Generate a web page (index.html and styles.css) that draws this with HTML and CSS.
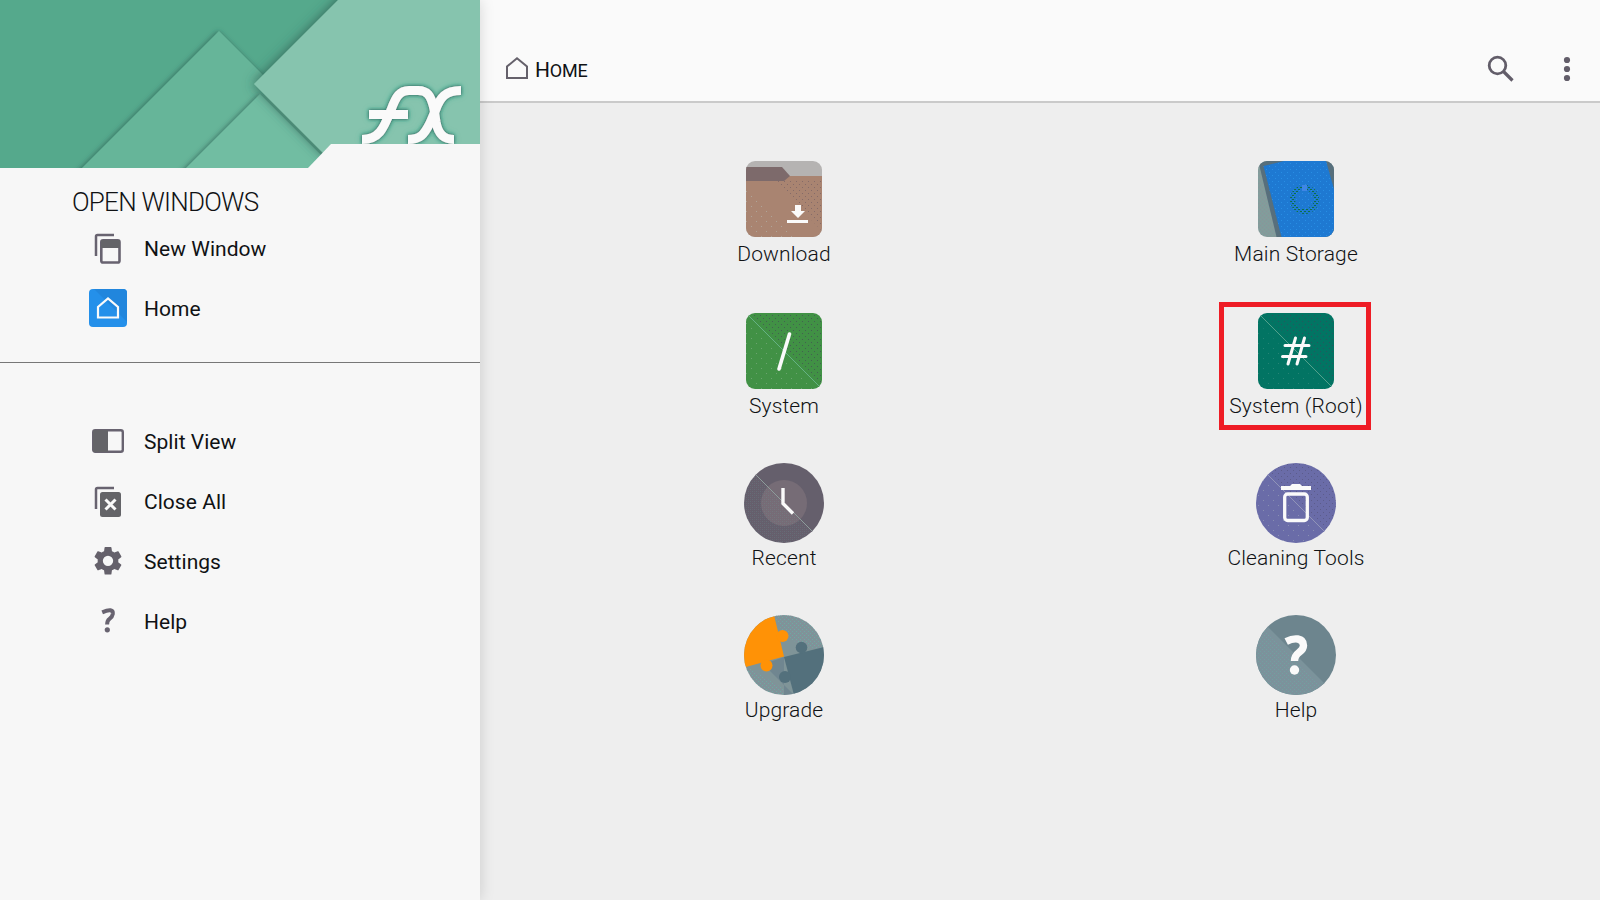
FILE: index.html
```html
<!DOCTYPE html>
<html lang="en">
<head>
<meta charset="utf-8">
<title>FX</title>
<link rel="stylesheet" href="styles.css">
</head>
<body>
<div class="app">
  <aside class="sidebar">
    <svg class="banner" width="480" height="168" viewBox="0 0 480 168">
      <defs>
        <filter id="soft" x="-30%" y="-30%" width="160%" height="160%"><feDropShadow dx="-1" dy="0" stdDeviation="6" flood-color="#2b5a50" flood-opacity=".8"/></filter>
        <filter id="thin" x="-30%" y="-30%" width="160%" height="160%"><feDropShadow dx="-1" dy="0" stdDeviation="2.500" flood-color="#2b5a50" flood-opacity=".75"/></filter>
        <filter id="glow" x="-20%" y="-20%" width="140%" height="140%"><feDropShadow dx="0" dy="0" stdDeviation="1.500" flood-color="#2d5f60" flood-opacity="1"/><feDropShadow dx="0" dy="0" stdDeviation="2.500" flood-color="#2f9377" flood-opacity=".7"/></filter>
      </defs>
      <rect width="480" height="168" fill="#55a98c"/>
      <path d="M219 31L340 152V200H50Z" fill="#66b599" filter="url(#thin)"/>
      <path d="M260 94L360 194H160Z" fill="#71bda2" filter="url(#thin)"/>
      <path d="M254 84L348-10H500V230H400Z" fill="#86c4ae" filter="url(#soft)"/>
      <g fill="none" stroke="#fafafa" stroke-width="9" filter="url(#glow)">
        <path d="M362 139.500C380 139.500 384 127 391 110C396 96 400 90.500 409 90.500H418C427 90.500 431 95 434 109L436 122C438 133 443 139.500 454 139.500"/>
        <path d="M369 114.500H408"/>
        <path d="M461 90.500C445 90.500 440 98 436 109L430 123C424 135 420 139.500 408 139.500"/>
      </g>
      <path d="M308 168L331 144H480V168Z" fill="#f7f7f7"/>
    </svg>
    <h2 class="side-title"><span>OPEN WINDOWS</span></h2>
    <nav class="side-list">
      <div class="side-item">
        <svg class="side-icon" viewBox="0 0 38 38"><path d="M7 27V7.500Q7 6 8.500 6H25" fill="none" stroke="#686370" stroke-width="2.500"/><rect x="12.300" y="11.300" width="18.200" height="22.200" rx="1.800" fill="#f7f7f7" stroke="#686370" stroke-width="2.600"/><path d="M12 11H31V19H12Z" fill="#646468"/></svg>
        <span>New Window</span>
      </div>
      <div class="side-item">
        <svg class="side-icon" viewBox="0 0 38 38"><rect width="38" height="38" rx="4" fill="#2490ea"/><path d="M5 0H34Q38 0 38 4V33Z" fill="#2186dd"/><path d="M9 28.500V18L19 9.500L29 18V28.500Z" fill="none" stroke="#fafafa" stroke-width="2.200"/></svg>
        <span>Home</span>
      </div>
    </nav>
    <div class="divider"></div>
    <nav class="side-list">
      <div class="side-item">
        <svg class="side-icon" viewBox="0 0 38 38"><rect x="4.200" y="8.200" width="29.600" height="21.600" rx="2" fill="#f7f7f7" stroke="#686370" stroke-width="2.400"/><path d="M4 8H19V30H4Z" fill="#646468"/></svg>
        <span>Split View</span>
      </div>
      <div class="side-item">
        <svg class="side-icon" viewBox="0 0 38 38"><path d="M7 27V7.500Q7 6 8.500 6H25" fill="none" stroke="#686370" stroke-width="2.500"/><rect x="11" y="10" width="21" height="25" rx="2.500" fill="#646468"/><path d="M16.500 17.500L26.500 27.500M26.500 17.500L16.500 27.500" stroke="#fafafa" stroke-width="3"/></svg>
        <span>Close All</span>
      </div>
      <div class="side-item">
        <svg class="side-icon" viewBox="2.600 2.700 18.800 18.800"><path fill="#65616b" d="M19.140 12.940c.04-.3.060-.610.060-.94 0-.320-.02-.640-.07-.94l2.030-1.580c.180-.140.230-.410.120-.610l-1.920-3.320c-.120-.220-.370-.290-.590-.220l-2.390.960c-.5-.380-1.030-.7-1.620-.94L14.400 2.810c-.04-.240-.240-.410-.480-.410h-3.840c-.240 0-.430.170-.470.410L9.250 5.350C8.660 5.590 8.120 5.920 7.630 6.290L5.240 5.330c-.220-.080-.470 0-.590.220L2.740 8.870c-.120.210-.080.470.120.610l2.030 1.580c-.050.3-.090.630-.090.940s.02.640.070.940l-2.030 1.580c-.180.140-.230.410-.120.610l1.920 3.320c.120.220.370.290.590.220l2.390-.96c.5.380 1.030.7 1.620.94l.360 2.540c.050.240.240.410.480.410h3.840c.240 0 .440-.170.470-.410l.360-2.540c.590-.240 1.130-.560 1.620-.94l2.390.96c.220.080.470 0 .590-.220l1.920-3.320c.120-.220.070-.470-.12-.610zM12 15.600A3.600 3.600 0 1 1 12 8.400a3.600 3.600 0 0 1 0 7.200z" transform="translate(12 12) scale(.71) translate(-12 -12)"/></svg>
        <span>Settings</span>
      </div>
      <div class="side-item">
        <svg class="side-icon" viewBox="0 0 38 38"><path d="M13.200 10.300Q24.500 5.500 23.800 12Q23.400 14.800 20.500 16.800Q18.100 18.500 18.100 22.500" fill="none" stroke="#686370" stroke-width="4"/><circle cx="18.300" cy="27.800" r="2.600" fill="#686370"/></svg>
        <span>Help</span>
      </div>
    </nav>
  </aside>

  <main class="main">
    <header class="topbar">
      <svg class="home" width="24" height="24" viewBox="0 0 24 24"><path d="M2 21V9.500L12 1.300L22 9.500V21Z" fill="none" stroke="#65616b" stroke-width="2"/></svg>
      <span class="crumb">H<small>OME</small></span>
      <svg class="search" width="28" height="28" viewBox="0 0 28 28"><circle cx="10.500" cy="10.500" r="8.300" fill="none" stroke="#625d69" stroke-width="2.800"/><path d="M16.500 16.500L25.500 25.500" stroke="#625d69" stroke-width="3.200"/></svg>
      <svg width="8" height="26" viewBox="0 0 8 26"><g fill="#625d69"><circle cx="4" cy="4" r="3.100"/><circle cx="4" cy="13" r="3.100"/><circle cx="4" cy="22" r="3.100"/></g></svg>
    </header>
    <section class="grid">
      <svg class="defs" width="0" height="0">
        <defs>
          <pattern id="dotDark" width="6" height="6" patternUnits="userSpaceOnUse"><path d="M1 1h1v1h-1zM4 4h1v1h-1z" fill="#444058" opacity=".6"/></pattern>
          <pattern id="dotLight" width="10" height="10" patternUnits="userSpaceOnUse"><path d="M2 2h1v1h-1zM7 7h1v1h-1z" fill="#b8c4be" opacity=".5"/></pattern>
          <pattern id="dotBlue" width="6" height="6" patternUnits="userSpaceOnUse"><path d="M1 1h1v1h-1zM4 4h1v1h-1z" fill="#2f9cf0" opacity=".6"/></pattern>
          <pattern id="mix" width="4" height="4" patternUnits="userSpaceOnUse"><path d="M0 0h1v1h-1zM2 2h1v1h-1z" fill="#6baeaa" opacity=".7"/><path d="M2 0h1v1h-1zM0 2h1v1h-1z" fill="#8a83a4" opacity=".5"/></pattern>
          <pattern id="ring" width="4" height="4" patternUnits="userSpaceOnUse"><path d="M0 0h2v1h-2zM2 2h2v1h-2z" fill="#0c7048"/></pattern>
          <clipPath id="sq"><rect x="2" y="2" width="76" height="76" rx="9"/></clipPath>
          <clipPath id="ci"><circle cx="40" cy="40" r="40"/></clipPath>
        </defs>
      </svg>
      <div class="tile">
        <svg class="tile-icon" viewBox="0 0 80 80"><g clip-path="url(#sq)"><path d="M0 0H80V80H0Z" fill="#b5b3b2"/><path d="M0 8H38L46 17V24H0Z" fill="#7d6a6b"/><path d="M2 22H40L46 17H80V80H0Z" fill="#a98471"/><path d="M30 22H80V74Z" fill="url(#dotDark)" opacity=".6"/><path d="M2 24L58 80H2Z" fill="url(#dotLight)"/></g><path d="M51 46H57V52H61L54 59L47 52H51ZM43 61H64V64H43Z" fill="#fafafa"/></svg>
        <span>Download</span>
      </div>
      <div class="tile">
        <svg class="tile-icon" viewBox="0 0 80 80"><g clip-path="url(#sq)"><path d="M0 0H80V80H0Z" fill="#849b9a"/><path d="M0 0H80V80H0Z" fill="url(#mix)" opacity=".4"/><path d="M3 5L8 2H78V80H21Z" fill="#576f7c"/><path d="M7.500 7L28 2H70L78 30V80H26Z" fill="#1e79d2"/><path d="M7.500 7L28 2H70L78 30V80H26Z" fill="url(#dotBlue)"/><circle cx="48.500" cy="40.500" r="12" fill="none" stroke="url(#ring)" stroke-width="5"/><path d="M46 26H51V32H46Z" fill="#3f86e5"/></g></svg>
        <span>Main Storage</span>
      </div>
      <div class="tile">
        <svg class="tile-icon" viewBox="0 0 80 80"><g clip-path="url(#sq)"><path d="M0 0H80V80H0Z" fill="#419145"/><path d="M2 2H78V78Z" fill="url(#dotDark)"/><path d="M2 2L78 78H2Z" fill="url(#dotLight)" opacity=".7"/><path d="M2 2L78 78" stroke="#65b184"/></g><path d="M45.500 23L35 58" stroke="#fafafa" stroke-width="3.600" stroke-linecap="round"/></svg>
        <span>System</span>
      </div>
      <div class="tile tile-marked">
        <svg class="tile-icon" viewBox="0 0 80 80"><g clip-path="url(#sq)"><path d="M0 0H80V80H0Z" fill="#027463"/><path d="M8 2H78V72Z" fill="url(#dotDark)"/><path d="M2 12L70 80H2Z" fill="url(#dotLight)" opacity=".4"/><path d="M2 2L78 78" stroke="#53a18c"/></g><path d="M39.500 27L32 53M48.500 27L41 53M29 34.500H53M26.500 45.500H50" stroke="#fafafa" stroke-width="3" stroke-linecap="round"/></svg>
        <span>System (Root)</span>
      </div>
      <div class="tile">
        <svg class="tile-icon" viewBox="0 0 80 80"><g clip-path="url(#ci)"><path d="M0 0H80V80H0Z" fill="#655f6c"/><circle cx="40" cy="40" r="23" fill="#766c76"/><path d="M0 0L80 80H0Z" fill="url(#mix)" opacity=".25"/><path d="M0 0L80 80" stroke="#8d9c9b"/></g><path d="M39 25V40.500L49 50.500" fill="none" stroke="#fafafa" stroke-width="3.400"/></svg>
        <span>Recent</span>
      </div>
      <div class="tile">
        <svg class="tile-icon" viewBox="0 0 80 80"><g clip-path="url(#ci)"><path d="M0 0H80V80H0Z" fill="#6a6ca8"/><path d="M0 0H80V80Z" fill="url(#dotDark)" opacity=".6"/><path d="M0 0L80 80H0Z" fill="url(#dotLight)" opacity=".8"/><path d="M0 0L80 80" stroke="#9194b8"/></g><path d="M25 23H34L36 21H44L46 23H55V27H25Z" fill="#fafafa"/><rect x="28.700" y="31" width="22.600" height="26.500" rx="3" fill="none" stroke="#fafafa" stroke-width="3.300"/></svg>
        <span>Cleaning Tools</span>
      </div>
      <div class="tile">
        <svg class="tile-icon" viewBox="0 0 80 80"><g clip-path="url(#ci)"><path d="M0 0H80V80H0Z" fill="#7f9498"/><path d="M30 0H80V34L60 32L40 20ZM0 50L50 80H0Z" fill="url(#mix)"/><path d="M23 48L40 42V80H50L20 50Z" fill="#708690"/><path d="M40 42L80 32V80H50Z" fill="#53707c"/><circle cx="57.500" cy="32.500" r="5.800" fill="#53707c"/><circle cx="41" cy="62" r="6" fill="#53707c"/><path d="M0 0H30L40 41.500L0 52.500Z" fill="#ff9206"/><circle cx="38.500" cy="21" r="6" fill="#ff9206"/><circle cx="22.500" cy="50.500" r="6" fill="#ff9206"/></g></svg>
        <span>Upgrade</span>
      </div>
      <div class="tile">
        <svg class="tile-icon" viewBox="0 0 80 80"><g clip-path="url(#ci)"><path d="M0 0H80V80H0Z" fill="#6d858e"/><path d="M0 0L80 80H0Z" fill="#7b939b"/><path d="M0 5L75 80H0Z" fill="url(#mix)" opacity=".6"/></g><path d="M30.200 26.500C38 22.500 47.500 22.500 47.500 30.500C47.500 38 38.500 36.500 38.500 46" fill="none" stroke="#fafafa" stroke-width="7.400"/><circle cx="38.500" cy="55" r="4.700" fill="#fafafa"/></svg>
        <span>Help</span>
      </div>
    </section>
  </main>
</div>
</body>
</html>
```

FILE: styles.css
```css
*, *::after { box-sizing: border-box; }
body {
  margin: 0;
  font-family: Roboto, "Liberation Sans", sans-serif;
  color: #101214;
  background: #eee;
}
.app { display: flex; width: 1600px; height: 900px; overflow: hidden; }
.sidebar {
  position: relative;
  z-index: 1;
  flex: 0 0 480px;
  background: #f7f7f7;
  box-shadow: 0 0 14px rgba(0, 0, 0, .15);
}
.banner { display: block; }
.side-title {
  height: 51px;
  margin: 0;
  padding: 19px 0 0 72px;
  font-size: 26px;
  line-height: 30px;
  font-weight: 300;
  letter-spacing: -.75px;
}
.side-item {
  display: flex;
  align-items: center;
  gap: 17px;
  height: 60px;
  padding-left: 89px;
  font-size: 21px;
  letter-spacing: .04px;
}
.side-icon { width: 38px; height: 38px; flex: none; margin-top: -2px; }
.divider { height: 1px; margin: 23px 0 49px; background: #777; }
.main { flex: 1; }
.topbar {
  display: flex;
  align-items: center;
  height: 103px;
  padding: 37px 29px 0 25px;
  background: #fafafa;
  border-bottom: 2px solid #cacaca;
}
.crumb { flex: 1; margin-left: 6px; padding-top: 2px; font-size: 21px; letter-spacing: -.2px; }
.crumb small { font-size: 18px; }
.search { margin-right: 48px; }
.grid {
  display: grid;
  grid-template-columns: 512px 512px;
  grid-auto-rows: 152px;
  padding: 56px 48px 0;
}
.defs { position: absolute; }
.tile {
  position: relative;
  display: flex;
  flex-direction: column;
  align-items: center;
  font-size: 21px;
  line-height: 30px;
  font-weight: 300;
  letter-spacing: .15px;
}
.tile-icon { width: 80px; height: 80px; flex: none; }
.tile-marked::after {
  content: "";
  position: absolute;
  top: -9px;
  left: 179px;
  width: 152px;
  height: 128px;
  border: 5px solid #ee1c25;
}
```
